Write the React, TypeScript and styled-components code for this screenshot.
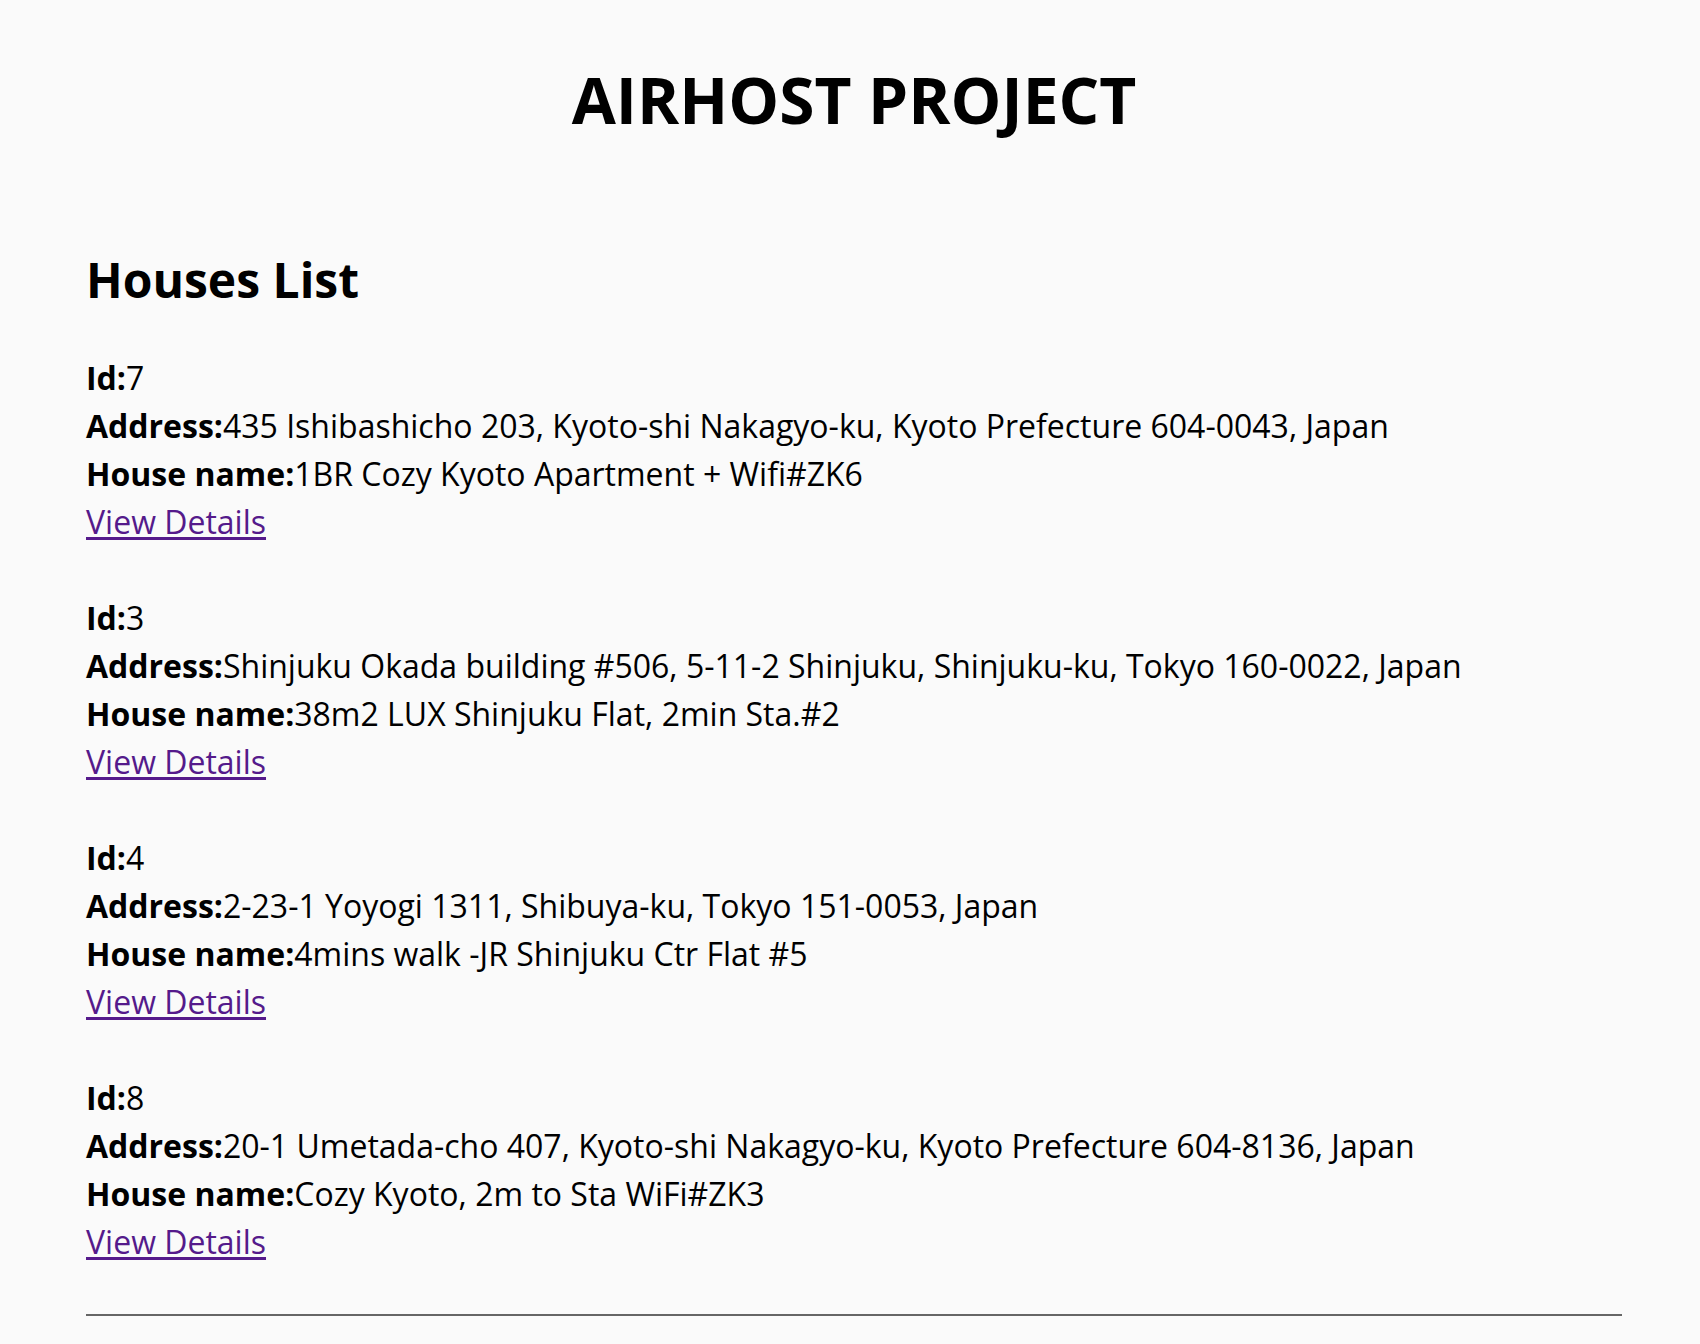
import React from "react";
import styled, { createGlobalStyle } from "styled-components";

const GlobalStyle = createGlobalStyle`
  html, body {
    margin: 0;
    padding: 0;
    background: #fafafa;
  }
  body {
    font-family: "Open Sans", "Noto Sans", sans-serif;
    color: #000;
  }
`;

const Page = styled.div`
  padding: 60px 78px 40px 86px;
`;

const Title = styled.h1`
  margin: 0;
  text-align: center;
  font-size: 64px;
  line-height: 80px;
  font-weight: 700;
`;

const SectionTitle = styled.h2`
  margin: 112px 0 0;
  font-size: 48px;
  line-height: 56px;
  font-weight: 700;
`;

const List = styled.div`
  margin-top: 46px;
  display: flex;
  flex-direction: column;
  gap: 48px;
`;

const Item = styled.div`
  font-size: 32px;
  line-height: 48px;
`;

const Line = styled.div`
  white-space: nowrap;
`;

const Label = styled.b`
  font-weight: 700;
`;

const DetailLink = styled.a`
  color: #551a8b;
  text-decoration: underline;
  text-underline-offset: 3px;
`;

const Rule = styled.hr`
  margin: 48px 0 0;
  border: none;
  height: 2px;
  background: #666;
`;

const houses = [
  {
    id: 7,
    address: "435 Ishibashicho 203, Kyoto-shi Nakagyo-ku, Kyoto Prefecture 604-0043, Japan",
    name: "1BR Cozy Kyoto Apartment + Wifi#ZK6",
  },
  {
    id: 3,
    address: "Shinjuku Okada building #506, 5-11-2 Shinjuku, Shinjuku-ku, Tokyo 160-0022, Japan",
    name: "38m2 LUX Shinjuku Flat, 2min Sta.#2",
  },
  {
    id: 4,
    address: "2-23-1 Yoyogi 1311, Shibuya-ku, Tokyo 151-0053, Japan",
    name: "4mins walk -JR Shinjuku Ctr Flat #5",
  },
  {
    id: 8,
    address: "20-1 Umetada-cho 407, Kyoto-shi Nakagyo-ku, Kyoto Prefecture 604-8136, Japan",
    name: "Cozy Kyoto, 2m to Sta WiFi#ZK3",
  },
];

export default function App() {
  return (
    <>
      <GlobalStyle />
      <Page>
        <Title>AIRHOST PROJECT</Title>
        <SectionTitle>Houses List</SectionTitle>
        <List>
          {houses.map((h) => (
            <Item key={h.id}>
              <Line>
                <Label>Id:</Label>
                {h.id}
              </Line>
              <Line>
                <Label>Address:</Label>
                {h.address}
              </Line>
              <Line>
                <Label>House name:</Label>
                {h.name}
              </Line>
              <Line>
                <DetailLink href="#">View Details</DetailLink>
              </Line>
            </Item>
          ))}
        </List>
        <Rule />
      </Page>
    </>
  );
}
